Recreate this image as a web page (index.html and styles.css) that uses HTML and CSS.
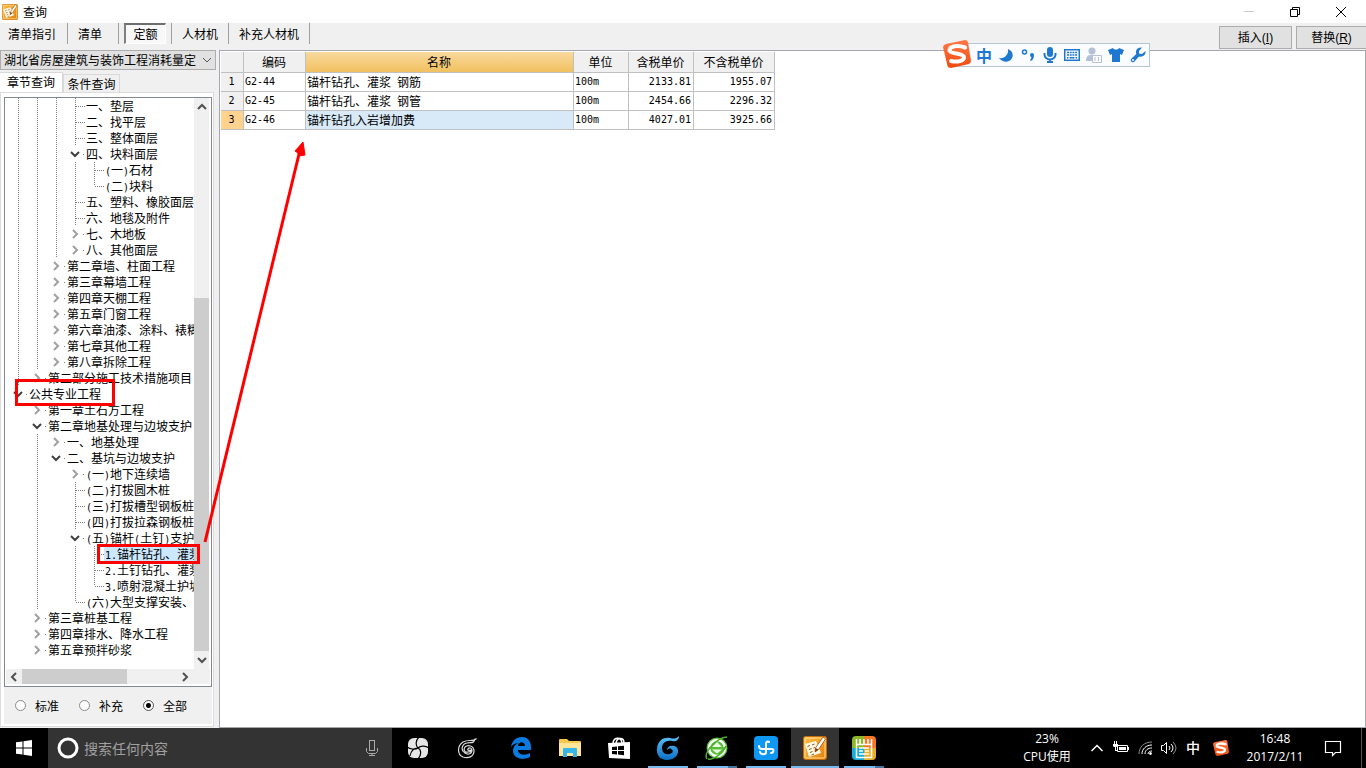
FILE: index.html
```html
<!DOCTYPE html>
<html lang="zh-CN">
<head>
<meta charset="utf-8">
<title>查询</title>
<link rel="stylesheet" href="styles.css">
</head>
<body>
<svg class="defs" aria-hidden="true">
  <defs>
    <linearGradient id="gold" x1="0" y1="0" x2="1" y2="1"><stop offset="0" stop-color="#ffc04a"/><stop offset="1" stop-color="#e07c08"/></linearGradient>
    <linearGradient id="flame" x1="0" y1="0" x2="0" y2="1"><stop offset="0" stop-color="#ff7a45"/><stop offset="1" stop-color="#f04a10"/></linearGradient>
    <linearGradient id="wave" x1="0" y1="0" x2="0" y2="1"><stop offset="0" stop-color="#5cc4f6"/><stop offset="1" stop-color="#0b6fc4"/></linearGradient>
    <symbol id="note" viewBox="0 0 24 24">
      <rect x=".5" y=".5" width="23" height="23" rx="2" fill="url(#gold)" stroke="#c46a08"/>
      <rect x="2" y="2" width="20" height="20" rx="1" fill="none" stroke="#ffe08a"/>
      <path d="M2 8 13 5 18 17 6 21Z" fill="#fff8e4"/>
      <path d="M4.500 10.500l2.500-1M9 9l2.500-1M6 13.500l2.500-1M10.500 12l1.500-.5M7 16.500l2.500-1M8.500 19l2.500-1" stroke="#8f5410"/>
      <path d="M20 1 12.500 12l-.5 4 3.500-2.500L22.500 3Z" fill="#fff" stroke="#a84c0a" stroke-width=".8"/>
      <path d="M12.500 12l-.5 4 3.500-2.500Z" fill="#7a3708"/>
    </symbol>
    <symbol id="sogou" viewBox="0 0 28 28">
      <path d="M3 4 22 0Q24 0 25 2L28 21Q28 23 26 24L8 28Q5 28 4.500 26L0 7Q0 5 3 4Z" fill="url(#flame)"/>
      <path d="M22 7.500C15 5 7 6 6.500 10c-.3 4 14 3 14.500 7 .4 4-7 5.500-13 4" fill="none" stroke="#fff" stroke-width="4" stroke-linecap="round"/>
    </symbol>
    <symbol id="down" viewBox="0 0 10 10"><path d="M1 3l4 4 4-4" fill="none" stroke="currentColor" stroke-width="2"/></symbol>
    <symbol id="right" viewBox="0 0 10 10"><path d="M3 1l4 4-4 4" fill="none" stroke="currentColor" stroke-width="2"/></symbol>
    <symbol id="up" viewBox="0 0 10 10"><path d="M1 7l4-4 4 4" fill="none" stroke="currentColor" stroke-width="2"/></symbol>
    <symbol id="left" viewBox="0 0 10 10"><path d="M7 1L3 5l4 4" fill="none" stroke="currentColor" stroke-width="2"/></symbol>
  </defs>
</svg>

<header class="titlebar">
  <svg class="app-icon"><use href="#note"/></svg>
  <h1>查询</h1>
  <button class="win" aria-label="最小化"><svg width="12" height="12"><path d="M1 5.500h10" stroke="#c8c8c8"/></svg></button>
  <button class="win" aria-label="还原"><svg width="12" height="12" fill="none" stroke="#000"><path d="M1.500 3.500h7v7h-7zM3.500 3V1.500h7v7H9"/></svg></button>
  <button class="win" aria-label="关闭"><svg width="12" height="12"><path d="M1 1l10 10M11 1L1 11" stroke="#000"/></svg></button>
</header>

<nav class="toolbar">
  <button class="tool first">清单指引</button>
  <button class="tool wide">清单</button>
  <span class="slot"><button class="tool pressed">定额</button></span>
  <button class="tool">人材机</button>
  <button class="tool">补充人材机</button>
  <span class="actions">
    <button class="action">插入<span class="key">(<u>I</u>)</span></button>
    <button class="action">替换<span class="key">(<u>R</u>)</span></button>
  </span>
</nav>

<main class="main">
  <aside class="side">
    <div class="combo">
      <select aria-label="定额库"><option>湖北省房屋建筑与装饰工程消耗量定</option></select>
      <svg class="combo-arrow" viewBox="0 0 10 10"><path d="M1 3l4 4 4-4" fill="none" stroke="#555"/></svg>
    </div>
    <div class="tabs" role="tablist">
      <button class="tab active" role="tab" aria-selected="true">章节查询</button>
      <button class="tab" role="tab" aria-selected="false">条件查询</button>
    </div>
    <section class="panel">
      <div class="treebox">
        <div class="tree-main">
          <ul class="tree" role="tree">
            <li><i class="v"></i><i class="v"></i><i class="v"></i><i class="t"></i><span>一、垫层</span></li>
            <li><i class="v"></i><i class="v"></i><i class="v"></i><i class="t"></i><span>二、找平层</span></li>
            <li><i class="v"></i><i class="v"></i><i class="v"></i><i class="t"></i><span>三、整体面层</span></li>
            <li><i class="v"></i><i class="v"></i><i class="v"></i><i class="x open"><svg><use href="#down"/></svg></i><span>四、块料面层</span></li>
            <li><i class="v"></i><i class="v"></i><i class="v"></i><i class="v"></i><i class="t"></i><span><b>(</b>一<b>)</b>石材</span></li>
            <li><i class="v"></i><i class="v"></i><i class="v"></i><i class="v"></i><i class="t end"></i><span><b>(</b>二<b>)</b>块料</span></li>
            <li><i class="v"></i><i class="v"></i><i class="v"></i><i class="t"></i><span>五、塑料、橡胶面层</span></li>
            <li><i class="v"></i><i class="v"></i><i class="v"></i><i class="t"></i><span>六、地毯及附件</span></li>
            <li><i class="v"></i><i class="v"></i><i class="v"></i><i class="x"><svg><use href="#right"/></svg></i><span>七、木地板</span></li>
            <li><i class="v"></i><i class="v"></i><i class="v"></i><i class="x"><svg><use href="#right"/></svg></i><span>八、其他面层</span></li>
            <li><i class="v"></i><i class="v"></i><i class="x"><svg><use href="#right"/></svg></i><span>第二章墙、柱面工程</span></li>
            <li><i class="v"></i><i class="v"></i><i class="x"><svg><use href="#right"/></svg></i><span>第三章幕墙工程</span></li>
            <li><i class="v"></i><i class="v"></i><i class="x"><svg><use href="#right"/></svg></i><span>第四章天棚工程</span></li>
            <li><i class="v"></i><i class="v"></i><i class="x"><svg><use href="#right"/></svg></i><span>第五章门窗工程</span></li>
            <li><i class="v"></i><i class="v"></i><i class="x"><svg><use href="#right"/></svg></i><span>第六章油漆、涂料、裱糊</span></li>
            <li><i class="v"></i><i class="v"></i><i class="x"><svg><use href="#right"/></svg></i><span>第七章其他工程</span></li>
            <li><i class="v"></i><i class="v"></i><i class="x"><svg><use href="#right"/></svg></i><span>第八章拆除工程</span></li>
            <li><i class="v"></i><i class="x"><svg><use href="#right"/></svg></i><span>第二部分施工技术措施项目</span></li>
            <li><i class="x open"><svg><use href="#down"/></svg></i><span>公共专业工程</span></li>
            <li><i></i><i class="x"><svg><use href="#right"/></svg></i><span>第一章土石方工程</span></li>
            <li><i></i><i class="x open"><svg><use href="#down"/></svg></i><span>第二章地基处理与边坡支护</span></li>
            <li><i></i><i class="v"></i><i class="x"><svg><use href="#right"/></svg></i><span>一、地基处理</span></li>
            <li><i></i><i class="v"></i><i class="x open"><svg><use href="#down"/></svg></i><span>二、基坑与边坡支护</span></li>
            <li><i></i><i class="v"></i><i></i><i class="x"><svg><use href="#right"/></svg></i><span><b>(</b>一<b>)</b>地下连续墙</span></li>
            <li><i></i><i class="v"></i><i></i><i class="t"></i><span><b>(</b>二<b>)</b>打拔圆木桩</span></li>
            <li><i></i><i class="v"></i><i></i><i class="t"></i><span><b>(</b>三<b>)</b>打拔槽型钢板桩</span></li>
            <li><i></i><i class="v"></i><i></i><i class="t"></i><span><b>(</b>四<b>)</b>打拔拉森钢板桩</span></li>
            <li><i></i><i class="v"></i><i></i><i class="x open"><svg><use href="#down"/></svg></i><span><b>(</b>五<b>)</b>锚杆<b>(</b>土钉<b>)</b>支护</span></li>
            <li><i></i><i class="v"></i><i></i><i class="v"></i><i class="t"></i><span class="selected"><b>1.</b>锚杆钻孔、灌浆</span></li>
            <li><i></i><i class="v"></i><i></i><i class="v"></i><i class="t"></i><span><b>2.</b>土钉钻孔、灌浆</span></li>
            <li><i></i><i class="v"></i><i></i><i class="v"></i><i class="t end"></i><span><b>3.</b>喷射混凝土护坡</span></li>
            <li><i></i><i class="v"></i><i></i><i class="t end"></i><span><b>(</b>六<b>)</b>大型支撑安装、</span></li>
            <li><i></i><i class="x"><svg><use href="#right"/></svg></i><span>第三章桩基工程</span></li>
            <li><i></i><i class="x"><svg><use href="#right"/></svg></i><span>第四章排水、降水工程</span></li>
            <li><i></i><i class="x"><svg><use href="#right"/></svg></i><span>第五章预拌砂浆</span></li>
          </ul>
          <div class="vbar">
            <svg class="arrow"><use href="#up"/></svg>
            <div class="vtrack"><div class="vthumb"></div></div>
            <svg class="arrow"><use href="#down"/></svg>
          </div>
        </div>
        <div class="hbar">
          <svg class="arrow"><use href="#left"/></svg>
          <div class="htrack"><div class="hthumb"></div></div>
          <svg class="arrow"><use href="#right"/></svg>
        </div>
      </div>
      <div class="radios">
        <label><input type="radio" name="kind">标准</label>
        <label><input type="radio" name="kind">补充</label>
        <label><input type="radio" name="kind" checked>全部</label>
      </div>
    </section>
  </aside>

  <section class="content">
    <table class="grid">
      <colgroup><col class="c-no"><col class="c-code"><col class="c-name"><col class="c-unit"><col class="c-tax"><col class="c-net"></colgroup>
      <thead><tr><th></th><th>编码</th><th class="sorted">名称</th><th>单位</th><th>含税单价</th><th>不含税单价</th></tr></thead>
      <tbody>
        <tr><th class="mono">1</th><td class="mono">G2-44</td><td>锚杆钻孔、灌浆&ensp;钢筋</td><td class="mono">100m</td><td class="mono num">2133.81</td><td class="mono num">1955.07</td></tr>
        <tr><th class="mono">2</th><td class="mono">G2-45</td><td>锚杆钻孔、灌浆&ensp;钢管</td><td class="mono">100m</td><td class="mono num">2454.66</td><td class="mono num">2296.32</td></tr>
        <tr class="current"><th class="mono">3</th><td class="mono">G2-46</td><td class="focus">锚杆钻孔入岩增加费</td><td class="mono">100m</td><td class="mono num">4027.01</td><td class="mono num">3925.66</td></tr>
      </tbody>
    </table>
  </section>
</main>

<div class="ime">
  <svg class="ime-logo"><use href="#sogou"/></svg>
  <span class="ime-mode">中</span>
  <svg viewBox="0 0 16 16" fill="#1f78d0"><path d="M10 2C15 4 16 9 13 12.500 10 16 4 15 1 11c5 1 10-3 9-9Z"/></svg>
  <svg viewBox="0 0 16 16"><circle cx="4.500" cy="5" r="2" fill="none" stroke="#1f78d0" stroke-width="1.500"/><path d="M10 8a2 2 0 0 1 4 0c0 3-1 5-3 6l-1-1c1-1 1.500-2 1.300-3A2 2 0 0 1 10 8Z" fill="#1f78d0"/></svg>
  <svg viewBox="0 0 16 16" fill="none" stroke="#1f78d0"><rect x="5" y="0" width="6" height="10" rx="3" fill="#1f78d0" stroke="none"/><path d="M2.500 6v1.500a5.500 5 0 0 0 11 0V6M8 12v3M5 15h6" stroke-width="2"/></svg>
  <svg viewBox="0 0 16 16"><path d="M.75 2.750h14.500v10.500H.75z" fill="#fff" stroke="#1f78d0" stroke-width="1.500"/><path d="M3 5.500h10M3 8h10" stroke="#1f78d0" stroke-width="1.500" stroke-dasharray="2 .7"/><path d="M3 10.800h1.500m1 0h5m1 0H13" stroke="#1f78d0" stroke-width="1.500"/></svg>
  <svg viewBox="0 0 16 16"><circle cx="6" cy="4" r="3.500" fill="#b4c0d4"/><path d="M0 14c0-5 2-6 6-6s5 1 6 2v4Z" fill="#b4c0d4"/><path d="M6.500 8.500h9v7h-9zM9 10v4M12.500 10v4" fill="#fff" stroke="#b4c0d4"/></svg>
  <svg viewBox="0 0 16 16" fill="#1f78d0"><path d="M5 1c1 2 5 2 6 0l5 2-2 5-2-1v8H4V7L2 8 0 3Z"/></svg>
  <svg viewBox="0 0 16 16" fill="#1f78d0"><path d="M15.500 4 12 7 9 6.500 9 4 12 .6C8 0 5 3 6.300 7L1 12c-1 2 1 4 3 3l5-5.500c4 1 7-2 6.500-5.500Z"/><circle cx="3" cy="13" r="1" fill="#fff"/></svg>
</div>

<svg class="marks" aria-hidden="true">
  <g fill="none" stroke="#f00" stroke-width="3">
    <rect x="16.500" y="380.500" width="97" height="24"/>
    <rect x="98.500" y="545.500" width="100" height="17"/>
    <path d="M205 542 300 150"/>
  </g>
  <path d="M303 142 295 151 298 153 299 156 305 155Z" fill="#f00" stroke="#f00"/>
</svg>

<footer class="taskbar">
  <button class="start" aria-label="开始"><svg width="16" height="16" fill="#fff"><path d="M0 2.300 6.500 1.400V7.500H0ZM7.500 1.200 16 0v7.500H7.500ZM0 8.500h6.500v6.100L0 13.700ZM7.500 8.500H16V16l-8.500-1.200Z"/></svg></button>
  <label class="search">
    <svg width="22" height="22"><circle cx="11" cy="11" r="9" fill="none" stroke="#fff" stroke-width="3"/></svg>
    <input type="text" placeholder="搜索任何内容">
    <svg width="12" height="18" fill="none" stroke="#aaa"><rect x="3.500" y="1.500" width="5" height="10"/><path d="M.5 9v3.500l2 2h7l2-2V9M6 14.500v2M3 16.500h6"/></svg>
  </label>
  <div class="apps">
    <button class="app" aria-label="风扇"><svg viewBox="0 0 22 22"><rect x="1" y="1" width="20" height="20" rx="6" fill="#e6e6e6"/><path d="M11 11C8 13 3 12 0 10M11 11C8 8 9 3 12 0M11 11c3-3 8-2 11 0M11 11c4 2 3 8 0 11M11 11c-4 0-7 3-8 8" fill="none" stroke="#000" stroke-width="1.200"/></svg></button>
    <button class="app" aria-label="旋风"><svg viewBox="0 0 22 22" fill="none" stroke="#ddd" stroke-width="1.200"><path d="M20 2C17 5 12 2 7 5c-6 4-6 12 0 15 6 2 11-1 11-6 0-5-6-7-9-4-2 3 0 6 3 5 2 0 3-1 3-2-2 1-4 0-3-1 1-2 4-1 4 1 0 4-4 5-7 3-5-3-3-9 2-10 4-1 7 1 8-4Z"/></svg></button>
    <button class="app edge" aria-label="浏览器"><svg viewBox="0 0 22 22" fill="#0b7be0"><path d="M1 10C2 4 6 0 12 0c6 0 9 5 9 10v3H8c0 5 7 6 12 3v4C12 24 3 21 3 14c0-4 2-6 5-8-2 0-5 1-7 4Zm7-1h7c0-5-7-5-7 0Z"/></svg></button>
    <button class="app" aria-label="文件资源管理器"><svg viewBox="0 0 22 22"><path d="M0 3q0-1 1-1h7l2 2h11q1 0 1 1v14H0Z" fill="#f6c94d"/><path d="M0 6h22v13H0Z" fill="#ffe49a"/><path d="M4 20v-8q0-1 1-1h12q1 0 1 1v8h-4v-4H8v4Z" fill="#35b5e8"/></svg></button>
    <button class="app" aria-label="应用商店"><svg viewBox="0 0 22 22"><path d="M5 7c0-7 8-8 9-1M8 6c1-6 8-6 8 0" fill="none" stroke="#fff" stroke-width="1.500"/><path d="M0 6 22 5V22L1 21Z" fill="#fff"/><path d="M4 10l5-.5V13H4ZM10 9.300l6-.5V13h-6ZM4 14h5v3.500L4 17ZM10 14h6v4.200l-6-.6Z" fill="#000"/></svg></button>
    <button class="app running" aria-label="旋风浏览器"><svg viewBox="0 0 24 24" fill="none"><path d="M23 0c0 4-3 6-7 5-6-1-10 2-10 7 0 4 3 7 7 6 4 0 5-4 2-5-1-1-3 0-4 1 0-5 10-6 11 0 1 6-5 10-11 10C4 24 0 19 1 12 2 4 8 1 14 2c4 1 6 1 9-2Z" fill="url(#wave)"/></svg></button>
    <button class="app running grouped" aria-label="安全浏览器"><svg viewBox="0 0 24 24"><circle cx="12" cy="12" r="10.500" fill="#58bd38"/><circle cx="12" cy="12" r="8" fill="none" stroke="#fff" stroke-width="2.500"/><path d="M4 12h16" stroke="#58bd38" stroke-width="2"/><path d="M7 11l5-5 5 5ZM7 13.500h10l-5 4Z" fill="#e8ffe0"/><path d="M2 23C-2 17 11 2 22 1M3 23c5 1 15-5 18-13" fill="none" stroke="#4fae2c" stroke-width="1.500"/></svg></button>
    <button class="app running" aria-label="云工具"><svg viewBox="0 0 24 24"><rect width="24" height="24" rx="4" fill="#0e98f4"/><path d="M15 6c-2-1-3 0-3 2v8c0 3-5 3-6 0M5 10c0 2 1 3 3 3h10c2 0 2 4-1 4" fill="none" stroke="#fff" stroke-width="2" stroke-linecap="round"/></svg></button>
    <button class="app running current" aria-label="计价软件"><svg><use href="#note"/></svg></button>
    <button class="app running grouped" aria-label="统计报表"><svg viewBox="0 0 24 24"><path d="M4 0h8v12H0V4Q0 0 4 0Z" fill="#8cb72b"/><path d="M12 0h8q4 0 4 4v8H12Z" fill="#f67826"/><path d="M0 12h12v12H4q-4 0-4-4Z" fill="#18acd7"/><path d="M12 12h12v8q0 4-4 4h-8Z" fill="#e8b02a"/><path d="M4.500 3v18.500h15V3M4.500 8.500h15M8 3v5M12 3v5M16 3v5M7 12h10M7 15h4M13 15h4M7 18h10" fill="none" stroke="#fff" stroke-width="1.500"/></svg></button>
  </div>
  <div class="tray">
    <div class="cpu">23%<br>CPU使用</div>
    <svg class="tray-icon" viewBox="0 0 16 16" fill="none" stroke="#fff"><path d="M2.500 11 8 5.500l5.500 5.500" stroke-width="1.500"/></svg>
    <svg class="tray-icon" viewBox="0 0 16 16"><path d="M4.500 5.500h10v6h-10z" fill="none" stroke="#fff"/><path d="M6 7h7v3H6zM15 7h1v3h-1zM1 1v3H0v2l1 1h1v4h3v-1H3V7l2-1V4H4V1H3v3H2V1Z" fill="#fff"/></svg>
    <svg class="tray-icon" viewBox="0 0 16 16" fill="none" stroke="#fff"><path d="M2 14C2 7 7 2 15 2" stroke="#888"/><path d="M5 14C5 9 9 5 15 5M8 14c0-4 3-6 7-6M11 14c0-2 2-3 4-3"/><circle cx="13.500" cy="13.500" r="1" fill="#fff"/></svg>
    <svg class="tray-icon" viewBox="0 0 16 16" fill="none" stroke="#fff"><path d="M.5 5.500h2l3-3v11l-3-3h-2zM8 6q2 2 0 4M10 4q4 4 0 8"/><path d="M12 2q6 6 0 12" stroke="#888"/></svg>
    <span class="lang">中</span>
    <svg class="tray-icon brand"><use href="#sogou"/></svg>
    <div class="clock">16:48<br>2017/2/11</div>
    <button class="notify" aria-label="通知"><svg width="18" height="18" fill="none" stroke="#fff"><path d="M1.500 2.500h15v11h-5l-3 3v-3h-7z" stroke-width="1.200"/></svg></button>
    <div class="desk"></div>
  </div>
</footer>
</body>
</html>
```
FILE: styles.css
```css
* { box-sizing: border-box; }

body {
  margin: 0;
  height: 100vh;
  display: flex;
  flex-direction: column;
  position: relative;
  overflow: hidden;
  background: #f0f0f0;
  color: #000;
  font: 12px/16px "Noto Sans CJK SC", sans-serif;
}

button, input, select { font: inherit; color: inherit; margin: 0; }
button { border: 0; padding: 0; background: none; }
svg { display: block; flex: none; }
.defs { position: absolute; width: 0; height: 0; }
.mono, .tree b { font-family: "DejaVu Sans Mono", monospace; font-size: 10px; font-weight: 400; }

/* Title bar */
.titlebar { display: flex; align-items: center; height: 23px; padding-right: 2px; background: #fff; flex: none; }
.app-icon { width: 16px; height: 16px; margin: 0 5px 0 2px; }
.titlebar h1 { flex: 1; margin: 0; font-size: 12px; font-weight: 400; }
.win { display: flex; align-items: center; justify-content: center; width: 46px; height: 20px; }

/* Toolbar */
.toolbar { display: flex; height: 27px; flex: none; }
.tool, .slot { height: 21px; border-right: 1px solid #a0a0a0; }
.tool { padding: 0 10px; }
.tool.first { padding: 0 11px 0 8px; }
.tool.wide { width: 51px; text-align: left; }
.slot { width: 53px; padding: 0 5px; }
.tool.pressed {
  width: 42px;
  padding: 0;
  background: #f8f8f8;
  border: 1px solid #fff;
  border-top: 2px solid #6e6e6e;
  border-left: 2px solid #808080;
}
.actions { display: flex; gap: 4px; margin-left: auto; padding: 3px 0 1px; }
.action { width: 73px; border: 1px solid #adadad; background: #e1e1e1; }
.action:last-child { width: 70px; border-right: 0; }
.key { font-family: "Liberation Sans", sans-serif; }

/* Main split */
.main { flex: 1; min-height: 0; display: flex; gap: 3px; }
.side { width: 216px; flex: none; display: flex; flex-direction: column; }
.combo { position: relative; height: 20px; }
.combo select {
  appearance: none;
  width: 100%;
  height: 20px;
  padding: 0 0 0 3px;
  border: 1px solid #adadad;
  border-radius: 0;
  background: #e1e1e1;
}
.combo-arrow { position: absolute; right: 4px; top: 5px; width: 10px; height: 10px; }
.tabs { display: flex; align-items: flex-end; height: 22px; }
.tab { width: 57px; height: 18px; border: 1px solid #d9d9d9; border-bottom: 0; }
.tab.active { width: 63px; height: 20px; padding-bottom: 2px; background: #fff; border-left: 0; }
.panel {
  flex: 1;
  min-height: 0;
  display: flex;
  flex-direction: column;
  margin: 0 2px 1px 0;
  padding: 4px 1px 2px 3px;
  border: 1px solid #dcdcdc;
  background: #fff;
}
.treebox { flex: 1; min-height: 0; display: flex; flex-direction: column; border: 1px solid #828790; padding: 0 1px 2px; }
.tree-main { flex: 1; min-height: 0; display: flex; }
.tree { flex: 1; min-width: 0; margin: 0; padding: 0 0 0 3px; list-style: none; overflow: hidden; white-space: nowrap; }
.tree li { display: flex; height: 16px; }
.tree i { flex: none; width: 19px; height: 16px; background-repeat: no-repeat; }
.tree .v {
  background-image: repeating-linear-gradient(#808080 0 1px, transparent 1px 2px);
  background-size: 1px 16px;
  background-position: 9px 0;
}
.tree .t {
  background-image: repeating-linear-gradient(#808080 0 1px, transparent 1px 2px), repeating-linear-gradient(90deg, #808080 0 1px, transparent 1px 2px);
  background-size: 1px 16px, 9px 1px;
  background-position: 9px 0, 10px 8px;
}
.tree .t.end { background-size: 1px 8px, 9px 1px; }
.tree .x {
  color: #a0a0a0;
  background-image: linear-gradient(#808080, #808080);
  background-size: 1px 1px;
  background-position: 17px 8px;
}
.tree .x.open { color: #404040; }
.tree .x svg { width: 10px; height: 10px; margin: 3px 0 0 4px; }
.tree span { flex: none; padding-left: 1px; }
.tree .selected { background: #cce8ff; }

.vbar { width: 16px; display: flex; flex-direction: column; align-items: center; background: #f0f0f0; border-right: 1px solid #fff; }
.arrow { width: 10px; height: 10px; margin: 4px; color: #505050; }
.vtrack { flex: 1; width: 100%; display: flex; flex-direction: column; justify-content: flex-end; }
.vthumb { height: 66%; background: #cdcdcd; }
.hbar { height: 15px; display: flex; align-items: center; background: #f0f0f0; padding-right: 17px; }
.hbar .arrow { margin: 3px; }
.htrack { flex: 1; height: 100%; }
.hthumb { width: 68%; height: 100%; background: #cdcdcd; }

.radios { height: 37px; display: flex; align-items: center; gap: 16px; padding-left: 11px; background: #f0f0f0; }
.radios label { display: flex; align-items: center; gap: 9px; width: 48px; white-space: nowrap; }
.radios input {
  appearance: none;
  flex: none;
  width: 11px;
  height: 11px;
  border: 1px solid #8a8a8a;
  border-radius: 50%;
  background: #fff;
}
.radios input:checked { border-color: #555; background: radial-gradient(circle, #000 0 2px, #fff 3px); }

/* Price table */
.content {
  flex: 1;
  min-width: 0;
  padding: 1px 0 0 1px;
  background: #fff;
  border: 1px solid #a6a6b0;
}
.grid { table-layout: fixed; width: 554px; border-collapse: separate; border-spacing: 0; }
.c-no { width: 23px; }
.c-code { width: 62px; }
.c-name { width: 268px; }
.c-unit { width: 55px; }
.c-tax { width: 65px; }
.c-net { width: 81px; }
.grid th, .grid td { height: 19px; padding: 0 2px 0 1px; border: 0 solid #c0c0c0; border-width: 0 1px 1px 0; line-height: 16px; white-space: nowrap; }
.grid td { text-align: left; }
.grid td.num { text-align: right; }
.grid th { background: #f0f0f0; font-weight: 400; }
.grid thead th { height: 21px; }
.grid thead th.sorted { background: linear-gradient(#f9d99f, #f1c15f); }
.grid .current th { background: #ffd28d; }
.grid .focus { background: #d8e9f8; }

/* Floating input-method bar */
.ime {
  position: absolute;
  top: 43px;
  right: 216px;
  height: 24px;
  display: flex;
  align-items: center;
  gap: 6px;
  padding: 0 3px 0 24px;
  background: #fafcff;
  border: 1px solid #b5c7d6;
}
.ime svg { width: 16px; height: 16px; }
.ime .ime-logo { position: absolute; left: -9px; top: -4px; width: 28px; height: 28px; }
.ime-mode { width: 16px; font-size: 16px; font-weight: 700; color: #1f78d0; text-align: center; }

.marks { position: absolute; left: 0; top: 0; width: 320px; height: 600px; pointer-events: none; }

/* Taskbar */
.taskbar { display: flex; height: 40px; flex: none; background: #000; color: #fff; }
.start { width: 48px; display: flex; align-items: center; justify-content: center; }
.search { width: 344px; display: flex; align-items: center; padding: 0 14px 0 9px; gap: 5px; background: #333; }
.search input { flex: 1; min-width: 0; padding: 0; border: 0; background: none; outline: 0; font-size: 14px; }
.search input::placeholder { color: #a0a0a0; opacity: 1; }
.apps { display: flex; gap: 1px; margin-left: 2px; }
.app { position: relative; width: 48px; display: flex; align-items: center; justify-content: center; }
.app svg { width: 22px; height: 22px; }
.app.edge { margin-left: 5px; }
.app.running svg { width: 24px; height: 24px; }
.app.running::after { content: ""; position: absolute; left: 4px; right: 4px; bottom: 0; height: 2px; background: #76b9ed; }
.app.grouped::after { background: linear-gradient(90deg, #76b9ed 78%, #47749a 78%); }
.app.current { background: #333; }
.app.current::after { left: 0; right: 0; }
.tray { display: flex; align-items: center; margin-left: auto; text-align: center; font-family: "Open Sans", "Noto Sans CJK SC", sans-serif; line-height: 18px; }
.cpu { width: 60px; margin-right: 8px; }
.tray-icon { width: 16px; height: 16px; margin: 0 4px; }
.lang { width: 24px; font-size: 14px; font-weight: 500; }
.tray-icon.brand { margin: 0 16px 0 8px; }
.clock { width: 60px; }
.notify { width: 56px; display: flex; justify-content: center; }
.desk { width: 5px; height: 40px; border-left: 1px solid #555; }
```
